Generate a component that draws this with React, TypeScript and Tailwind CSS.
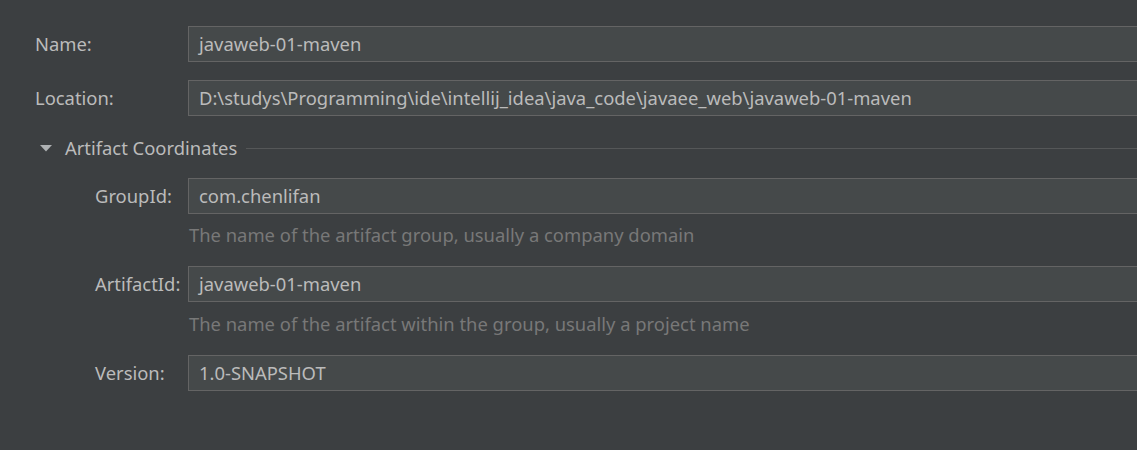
const FONT = "font-['Noto_Sans','Open_Sans',sans-serif]";

function Field({ value }: { value: string }) {
  return (
    <div className="flex h-9 w-[1000px] shrink-0 items-center border border-[#646464] bg-[#45494a] pl-[10px] text-[18.4px] text-[#bbbbbb]">
      <span className="whitespace-nowrap">{value}</span>
    </div>
  );
}

function Hint({ children, top }: { children: string; top: string }) {
  return <p className={`${top} ml-[189px] h-[20px] text-[18.4px] leading-[20px] text-[#787878]`}>{children}</p>;
}

function Row({ label, value, indent }: { label: string; value: string; indent: boolean }) {
  return (
    <div className="flex items-center">
      <span className={`${indent ? 'ml-[95px] w-[93px]' : 'ml-[35px] w-[153px]'} shrink-0 text-[18.4px] text-[#bbbbbb]`}>
        {label}
      </span>
      <Field value={value} />
    </div>
  );
}

export default function App() {
  return (
    <div className={`${FONT} h-[450px] w-[1137px] overflow-hidden bg-[#3c3f41] pt-[26px]`}>
      <Row label="Name:" value="javaweb-01-maven" indent={false} />
      <div className="mt-[18px]">
        <Row
          label="Location:"
          value="D:\studys\Programming\ide\intellij_idea\java_code\javaee_web\javaweb-01-maven"
          indent={false}
        />
      </div>

      <div className="mt-[20px] flex h-[24px] items-center">
        <svg className="ml-[40px] shrink-0" width="12" height="7" viewBox="0 0 12 7">
          <polygon points="0,0 12,0 6,6.5" fill="#aeb1b3" />
        </svg>
        <span className="ml-[13px] text-[18.4px] text-[#bbbbbb]">Artifact Coordinates</span>
        <div className="ml-[9px] h-px flex-1 bg-[#555758]" />
      </div>

      <div className="mt-[18px]">
        <Row label="GroupId:" value="com.chenlifan" indent />
      </div>
      <Hint top="mt-[11px]">The name of the artifact group, usually a company domain</Hint>

      <div className="mt-[21px]">
        <Row label="ArtifactId:" value="javaweb-01-maven" indent />
      </div>
      <Hint top="mt-[12px]">The name of the artifact within the group, usually a project name</Hint>

      <div className="mt-[21px]">
        <Row label="Version:" value="1.0-SNAPSHOT" indent />
      </div>
    </div>
  );
}
